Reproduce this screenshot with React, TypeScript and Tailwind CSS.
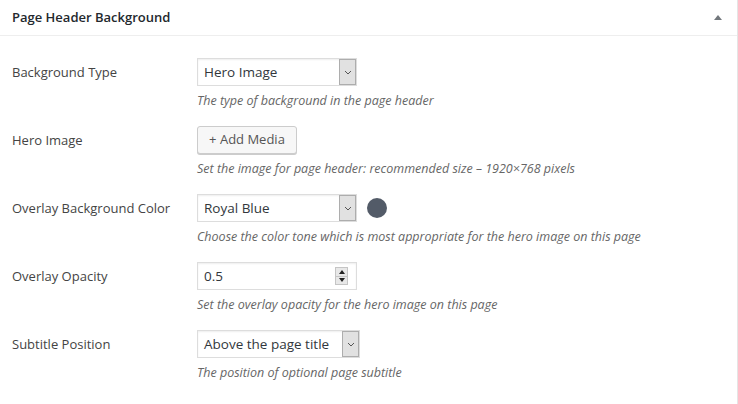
import React from "react";

const font = { fontFamily: '"Open Sans", "Noto Sans", sans-serif' };

function Chevron() {
  return (
    <svg width="8" height="5" viewBox="0 0 8 5" fill="none">
      <path d="M1 1l3 3 3-3" stroke="#555" strokeWidth="1" />
    </svg>
  );
}

function FakeSelect({ value, width }: { value: string; width: string }) {
  return (
    <div className={`flex h-[28px] ${width} items-stretch border border-[#ddd] bg-white shadow-[inset_0_1px_2px_rgba(0,0,0,0.07)]`}>
      <div className="flex flex-1 items-center pl-[6px] text-[13.5px] text-[#32373c]">{value}</div>
      <div className="flex w-[17px] items-center justify-center border border-[#adadad] bg-[#e1e1e1]">
        <Chevron />
      </div>
    </div>
  );
}

function Field({
  label,
  description,
  children,
}: {
  label: string;
  description: string;
  children: React.ReactNode;
}) {
  return (
    <div className="flex">
      <div className="w-[197px] shrink-0 pl-[12px] pt-[4px] text-[13px] leading-[20px] text-[#444]">{label}</div>
      <div className="flex flex-col">
        {children}
        <p className="mt-[5px] text-[12.5px] italic leading-[20px] text-[#666]">{description}</p>
      </div>
    </div>
  );
}

export default function App() {
  return (
    <div style={font} className="min-h-[404px] w-[738px] border-r border-[#e5e5e5] bg-white">
      <div className="flex h-[36px] items-center justify-between border-b border-[#eee] pl-[12px] pr-[15px]">
        <h2 className="text-[13px] font-semibold text-[#23282d]">Page Header Background</h2>
        <svg width="8" height="5" viewBox="0 0 8 5">
          <path d="M4 0L8 5H0z" fill="#72777c" />
        </svg>
      </div>

      <div className="flex flex-col gap-[15px] pt-[22px]">
        <Field label="Background Type" description="The type of background in the page header">
          <FakeSelect value="Hero Image" width="w-[160px]" />
        </Field>

        <Field label="Hero Image" description="Set the image for page header: recommended size – 1920×768 pixels">
          <button className="h-[28px] w-[100px] rounded-[3px] border border-[#ccc] bg-[#f7f7f7] text-[13px] text-[#555] shadow-[0_1px_0_#ccc]">
            + Add Media
          </button>
        </Field>

        <Field label="Overlay Background Color" description="Choose the color tone which is most appropriate for the hero image on this page">
          <div className="flex items-center gap-[10px]">
            <FakeSelect value="Royal Blue" width="w-[160px]" />
            <div className="h-[20px] w-[20px] rounded-full bg-[#535b68]" />
          </div>
        </Field>

        <Field label="Overlay Opacity" description="Set the overlay opacity for the hero image on this page">
          <div className="flex h-[28px] w-[160px] items-center border border-[#ddd] bg-white pl-[6px] pr-[8px] shadow-[inset_0_1px_2px_rgba(0,0,0,0.07)]">
            <span className="flex-1 text-[13.5px] text-[#32373c]">0.5</span>
            <div className="flex h-[18px] w-[13px] flex-col border border-[#c5c5c5] bg-[#e8e8e8]">
              <div className="flex flex-1 items-center justify-center border-b border-[#c5c5c5]">
                <svg width="6" height="4" viewBox="0 0 6 4"><path d="M3 0L6 4H0z" fill="#222" /></svg>
              </div>
              <div className="flex flex-1 items-center justify-center">
                <svg width="6" height="4" viewBox="0 0 6 4"><path d="M0 0h6L3 4z" fill="#222" /></svg>
              </div>
            </div>
          </div>
        </Field>

        <Field label="Subtitle Position" description="The position of optional page subtitle">
          <FakeSelect value="Above the page title" width="w-[163px]" />
        </Field>
      </div>
    </div>
  );
}
